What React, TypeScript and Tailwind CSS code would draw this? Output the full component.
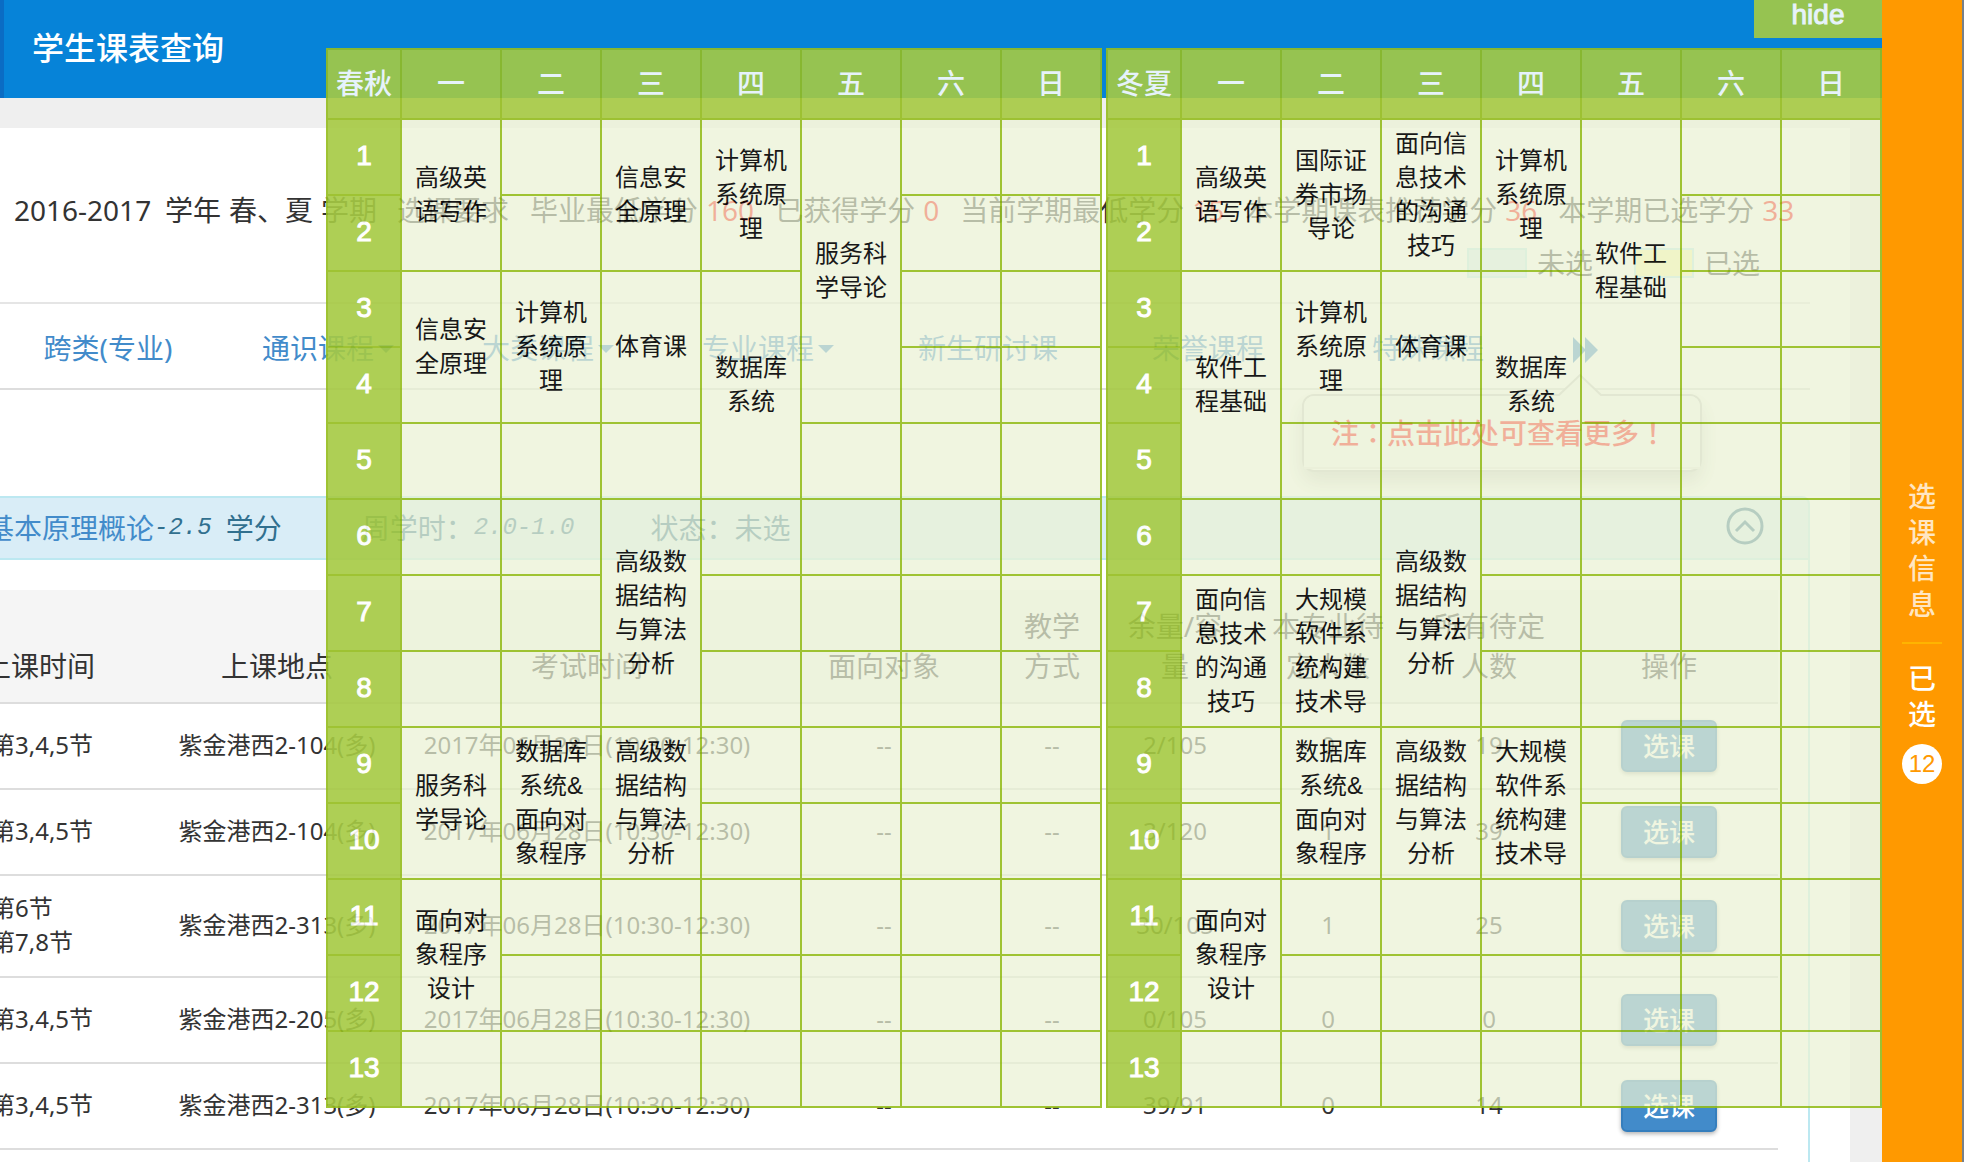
import React from "react";

type Slot = { text?: string; span: number } | null;

const DAYS = ["一", "二", "三", "四", "五", "六", "日"];

type Course = { day: number; start: number; span: number; text: string };

const SPRING_AUTUMN: Course[] = [
  { day: 0, start: 1, span: 2, text: "高级英语写作" },
  { day: 0, start: 3, span: 2, text: "信息安全原理" },
  { day: 0, start: 9, span: 2, text: "服务科学导论" },
  { day: 0, start: 11, span: 2, text: "面向对象程序设计" },
  { day: 1, start: 3, span: 2, text: "计算机系统原理" },
  { day: 1, start: 9, span: 2, text: "数据库系统&面向对象程序" },
  { day: 2, start: 1, span: 2, text: "信息安全原理" },
  { day: 2, start: 3, span: 2, text: "体育课" },
  { day: 2, start: 6, span: 3, text: "高级数据结构与算法分析" },
  { day: 2, start: 9, span: 2, text: "高级数据结构与算法分析" },
  { day: 3, start: 1, span: 2, text: "计算机系统原理" },
  { day: 3, start: 3, span: 3, text: "数据库系统" },
  { day: 4, start: 1, span: 4, text: "服务科学导论" },
];

const WINTER_SUMMER: Course[] = [
  { day: 0, start: 1, span: 2, text: "高级英语写作" },
  { day: 0, start: 3, span: 3, text: "软件工程基础" },
  { day: 0, start: 7, span: 2, text: "面向信息技术的沟通技巧" },
  { day: 0, start: 11, span: 2, text: "面向对象程序设计" },
  { day: 1, start: 1, span: 2, text: "国际证券市场导论" },
  { day: 1, start: 3, span: 2, text: "计算机系统原理" },
  { day: 1, start: 7, span: 2, text: "大规模软件系统构建技术导" },
  { day: 1, start: 9, span: 2, text: "数据库系统&面向对象程序" },
  { day: 2, start: 1, span: 2, text: "面向信息技术的沟通技巧" },
  { day: 2, start: 3, span: 2, text: "体育课" },
  { day: 2, start: 6, span: 3, text: "高级数据结构与算法分析" },
  { day: 2, start: 9, span: 2, text: "高级数据结构与算法分析" },
  { day: 3, start: 1, span: 2, text: "计算机系统原理" },
  { day: 3, start: 3, span: 3, text: "数据库系统" },
  { day: 3, start: 9, span: 2, text: "大规模软件系统构建技术导" },
  { day: 4, start: 1, span: 4, text: "软件工程基础" },
];

function slotAt(courses: Course[], day: number, period: number): Slot {
  const hit = courses.find(
    (c) => c.day === day && period >= c.start && period < c.start + c.span
  );
  if (!hit) return { span: 1 };
  return hit.start === period ? { text: hit.text, span: hit.span } : null;
}

function Timetable({ title, courses }: { title: string; courses: Course[] }) {
  const th = "border-2 border-[#95bd1e] bg-[#a6ca43] px-0 text-[28px] text-white";
  return (
    <table className="w-[776px] table-fixed border-collapse text-center">
      <thead>
        <tr className="h-[70px]">
          <th scope="col" className={th + " w-[74px] pt-0.5 pb-0 font-medium"}>{title}</th>
          {DAYS.map((d) => (
            <th key={d} scope="col" className={th + " pt-0.5 pb-0 font-medium"}>{d}</th>
          ))}
        </tr>
      </thead>
      <tbody>
        {Array.from({ length: 13 }, (_, i) => i + 1).map((period) => (
          <tr key={period} className="h-[76px]">
            <th
              scope="row"
              className={th + " pt-0 pb-0.5 leading-8 font-normal [-webkit-text-stroke:1px_white]"}
            >
              {period}
            </th>
            {DAYS.map((d, day) => {
              const slot = slotAt(courses, day, period);
              return slot ? (
                <td
                  key={d}
                  rowSpan={slot.span}
                  className="border-2 border-[#95bd1e] bg-[rgba(235,242,213,0.8)] px-3 py-0 text-2xl leading-[34px] break-all text-black"
                >
                  {slot.text}
                </td>
              ) : null;
            })}
          </tr>
        ))}
      </tbody>
    </table>
  );
}

const CREDITS = [
  { label: "毕业最低学分", value: "160" },
  { label: "已获得学分", value: "0" },
  { label: "当前学期最低学分", value: "15" },
  { label: "本学期课表推荐学分", value: "36" },
  { label: "本学期已选学分", value: "33" },
];

const TABS = [
  { label: "跨类(专业)", menu: false },
  { label: "通识课程", menu: true },
  { label: "大类课程", menu: true },
  { label: "专业课程", menu: true },
  { label: "新生研讨课", menu: false },
  { label: "荣誉课程", menu: false },
  { label: "特殊课程", menu: false },
];

const COLUMNS = [
  { title: "上课时间", width: "w-[234px]" },
  { title: "上课地点", width: "w-[242px]" },
  { title: "考试时间", width: "w-[378px]" },
  { title: "面向对象", width: "w-[216px]" },
  { title: "教学\n方式", width: "w-[120px]" },
  { title: "余量/容\n量", width: "w-[126px]" },
  { title: "本专业待\n定人数", width: "w-[180px]" },
  { title: "所有待定\n人数", width: "w-[142px]" },
  { title: "操作", width: "" },
];

const EXAM = "2017年06月28日(10:30-12:30)";
const SECTIONS = [
  { time: "第3,4,5节", place: "紫金港西2-104(多)", left: "2/105", major: "0", all: "19" },
  { time: "第3,4,5节", place: "紫金港西2-104(多)", left: "3/120", major: "1", all: "39" },
  { time: "第6节\n第7,8节", place: "紫金港西2-313(多)", left: "30/105", major: "1", all: "25" },
  { time: "第3,4,5节", place: "紫金港西2-205(多)", left: "0/105", major: "0", all: "0" },
  { time: "第3,4,5节", place: "紫金港西2-313(多)", left: "39/91", major: "0", all: "14" },
];

function TermSummary() {
  return (
    <section className="mr-10 border-b-2 border-[#e5e5e5] pt-[62px] pb-6 text-[28px] leading-10">
      <div className="flex pl-3.5 whitespace-nowrap">
        <div className="mr-5 flex gap-2">
          <span className="w-[143px]">2016-2017</span>
          <span>学年</span>
          <span>春、夏</span>
          <span>学期</span>
        </div>
        <div className="flex gap-[21px]">
          <span>选课要求</span>
          {CREDITS.map((c) => (
            <span key={c.label} className="flex gap-2">
              {c.label}
              <span className="text-[#ff0000]">{c.value}</span>
            </span>
          ))}
        </div>
      </div>
      <div className="mt-[18px] mr-[50px] flex h-[30px] items-center justify-end gap-[41px]">
        <span className="flex items-center gap-2.5">
          <span className="h-[30px] w-[60px] border-2 border-[#bce8f1] bg-[#d9edf7]" />
          未选
        </span>
        <span className="flex items-center gap-2.5">
          <span className="h-[30px] w-[60px] border-2 border-[#bce8f1] bg-[#fff9aa]" />
          已选
        </span>
      </div>
    </section>
  );
}

function CategoryTabs() {
  return (
    <nav className="relative mr-10 flex h-[86px] items-center border-b-2 border-[#ddd] pt-1 text-[28px] text-[#428bca]">
      <div className="-ml-0.5 flex">
        {TABS.map((t) => (
          <a key={t.label} href="#" className="flex w-[220px] items-center justify-center gap-1 whitespace-nowrap">
            {t.label}
            {t.menu && (
              <svg width="16" height="8" viewBox="0 0 16 8" fill="currentColor" className="mt-0.5">
                <path d="M0 0h16L8 8z" />
              </svg>
            )}
          </a>
        ))}
      </div>
      <a href="#" aria-label="更多" className="mt-1 ml-[35px]">
        <svg width="25" height="26" viewBox="0 0 25 26" fill="currentColor">
          <path d="M0 0l12 12V0l13 13-13 13V14L0 26z" />
        </svg>
      </a>
      <div className="absolute top-[90px] left-[1302px] h-[78px] w-[400px] rounded-xl border-2 border-[#ccc] bg-white shadow-[0_10px_20px_rgba(0,0,0,0.2)]">
        <svg width="44" height="22" viewBox="0 0 44 22" className="absolute -top-[22px] left-[254px]">
          <path d="M0 22L22 1l22 21" fill="#f7f7f7" stroke="#ccc" strokeWidth="2" />
        </svg>
        <p className="h-[73px] rounded-t-[10px] border-b-2 border-[#ebebeb] bg-[#f7f7f7] pl-[27px] text-[28px] leading-[72px] font-medium whitespace-nowrap text-[#ff0000]">
          注<span lang="zh-TW" className="font-['Noto_Sans_CJK_TC',sans-serif]">：</span>点击此处可查看更多
          <span lang="zh-TW" className="font-['Noto_Sans_CJK_TC',sans-serif]">！</span>
        </p>
      </div>
    </nav>
  );
}

function CoursePanel() {
  return (
    <section className="mt-[106px] mr-10 flex flex-1 flex-col">
      <header className="-ml-4 flex h-16 shrink-0 items-center rounded-tr-lg border-2 border-[#bce8f1] bg-[#d9edf7] pr-11 text-[28px] whitespace-nowrap text-[#31708f]">
        <a href="#" className="text-[#428bca]">基本原理概论</a>
        <span className="font-['Liberation_Mono'] text-2xl italic">-2.5</span>
        <span className="ml-3.5">学分</span>
        <span className="ml-20">周学时：</span>
        <span className="font-['Liberation_Mono'] text-2xl italic">2.0-1.0</span>
        <span className="ml-[76px]">状态：未选</span>
        <button type="button" aria-label="收起" className="mb-1 ml-auto">
          <svg width="38" height="38" viewBox="0 0 38 38" fill="none" stroke="currentColor" strokeWidth="3">
            <circle cx="19" cy="19" r="17" />
            <path d="M10 24l9-9 9 9" />
          </svg>
        </button>
      </header>
      <div className="flex-1 border-r-2 border-[#bce8f1] pt-[30px] pr-[30px]">
        <div className="-ml-[78px]">
          <table className="w-full table-fixed border-separate border-spacing-0 text-center">
            <thead>
              <tr>
                {COLUMNS.map((c) => (
                  <th
                    key={c.title}
                    scope="col"
                    className={
                      "h-[114px] border-b-2 border-[#ddd] bg-[#f5f5f5] p-0 pb-4 align-bottom text-[28px] leading-10 font-normal whitespace-pre " +
                      c.width
                    }
                  >
                    {c.title}
                  </th>
                ))}
              </tr>
            </thead>
            <tbody className="text-2xl leading-[34px] [&_td]:border-b-2 [&_td]:border-[#ddd] [&_td]:px-0 [&_td]:pt-0 [&_td]:pb-0.5">
              {SECTIONS.map((s, i) => (
                <tr key={i} className={s.time.includes("\n") ? "h-[102px]" : "h-[86px]"}>
                  <td className="text-left whitespace-pre">
                    <span className="ml-[69px] inline-block">{s.time}</span>
                  </td>
                  <td className="whitespace-nowrap">{s.place}</td>
                  <td className="whitespace-nowrap">{EXAM}</td>
                  <td>--</td>
                  <td>--</td>
                  <td>{s.left}</td>
                  <td>{s.major}</td>
                  <td>{s.all}</td>
                  <td>
                    <button
                      type="button"
                      className="mx-auto mt-0.5 block h-[52px] w-24 rounded-md border-2 border-[#357ebd] bg-[#428bca] text-[26px] leading-[44px] font-medium text-white shadow-[0_2px_4px_rgba(0,0,0,0.3)]"
                    >
                      选课
                    </button>
                  </td>
                </tr>
              ))}
            </tbody>
          </table>
        </div>
      </div>
    </section>
  );
}

function SideBar() {
  return (
    <aside className="flex w-[82px] shrink-0 flex-col items-center border-r-2 border-[#77808a] bg-[#ff9900] pt-[478px] text-[28px] leading-9 font-medium">
      <a href="#" className="w-7 break-all text-[#ffe6c2]">选课信息</a>
      <div className="mt-5 h-0.5 w-10 bg-[#ffb400]" />
      <a href="#" className="mt-4 w-7 break-all text-white">已选</a>
      <span className="mt-3 flex size-10 items-center justify-center rounded-full bg-white font-['Liberation_Sans'] text-2xl font-normal text-[#ff9900]">
        12
      </span>
    </aside>
  );
}

export default function App() {
  return (
    <div
      lang="zh-CN"
      className="flex h-screen overflow-hidden bg-[#efefef] font-['Noto_Sans','Noto_Sans_CJK_SC',sans-serif] text-[#333]"
    >
      <div className="relative flex min-w-0 flex-1 flex-col overflow-hidden">
        <header className="flex h-[98px] shrink-0 items-center border-l-4 border-[#0a6cc4] bg-[#0683d8] pb-0.5 pl-7">
          <h1 className="text-[32px] font-medium text-white">学生课表查询</h1>
        </header>
        <main className="mt-[30px] mr-8 flex flex-1 flex-col bg-white">
          <TermSummary />
          <CategoryTabs />
          <CoursePanel />
        </main>
        <div className="absolute top-0 right-0 flex flex-col items-end font-['Liberation_Sans','Noto_Sans_CJK_SC',sans-serif] opacity-90">
          <button
            type="button"
            className="h-[38px] w-32 bg-[#a6ca43] pb-2 text-[28px] leading-7 text-white [-webkit-text-stroke:1px_white]"
          >
            hide
          </button>
          <div className="mt-2.5 flex gap-1">
            <Timetable title="春秋" courses={SPRING_AUTUMN} />
            <Timetable title="冬夏" courses={WINTER_SUMMER} />
          </div>
        </div>
      </div>
      <SideBar />
    </div>
  );
}
